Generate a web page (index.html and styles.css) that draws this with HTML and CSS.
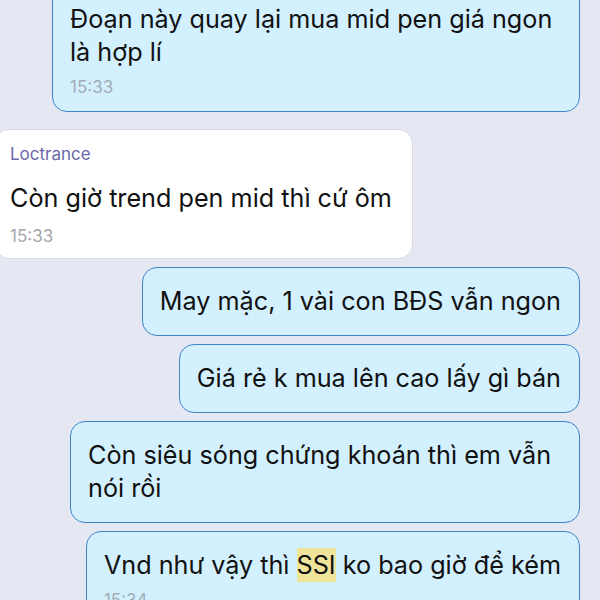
FILE: index.html
```html
<!DOCTYPE html>
<html lang="vi">

<head>
    <meta charset="UTF-8">
    <meta name="viewport" content="width=device-width, initial-scale=1.0">
    <title>Chat</title>
    <link rel="stylesheet" href="styles.css">
</head>

<body>
    <div class="chat">
        <div class="bubble out first">
            <div class="text">Đoạn này quay lại mua mid pen giá ngon là hợp lí</div>
            <div class="time">15:33</div>
        </div>

        <div class="bubble in">
            <div class="name">Loctrance</div>
            <div class="text">Còn giờ trend pen mid thì cứ ôm</div>
            <div class="time">15:33</div>
        </div>

        <div class="bubble out">
            <div class="text">May mặc, 1 vài con BĐS vẫn ngon</div>
        </div>

        <div class="bubble out">
            <div class="text">Giá rẻ k mua lên cao lấy gì bán</div>
        </div>

        <div class="bubble out">
            <div class="text">Còn siêu sóng chứng khoán thì em vẫn nói rồi</div>
        </div>

        <div class="bubble out">
            <div class="text">Vnd như vậy thì <span class="mark">SSI</span> ko bao giờ để kém</div>
            <div class="time">15:34</div>
        </div>
    </div>
</body>

</html>
```

FILE: styles.css
```css
body {
    margin: 0;
    background: #e5e8f2;
    font-family: 'Inter', 'Noto Sans', sans-serif;
    overflow: hidden;
    height: 600px;
}

.chat {
    display: flex;
    flex-direction: column;
    align-items: flex-end;
    gap: 8px;
    padding-right: 20px;
    margin-top: -15px;
}

.bubble {
    box-sizing: border-box;
    max-width: 510px;
    padding: 17px 18px 17px 17px;
    border-radius: 15px;
    background: #d2f0fd;
    border: 1.5px solid #3f84c8;
    color: #111;
}

.bubble.first {
    width: 528px;
    max-width: none;
    padding-bottom: 13px;
    margin-bottom: 9px;
}

.bubble.in {
    align-self: flex-start;
    margin-left: -6px;
    padding: 13px 16px 11px 15px;
    background: #ffffff;
    border: 1px solid #d9dce4;
    width: 419px;
}

.text {
    font-size: 25.2px;
    line-height: 33px;
}

.name {
    font-size: 17px;
    line-height: 22px;
    color: #6a68aa;
    margin-bottom: 17px;
}

.time {
    font-size: 17px;
    line-height: 22px;
    color: #a3adb6;
    margin-top: 7px;
}

.bubble.in .time {
    color: #a6a6aa;
    margin-top: 10px;
}

.mark {
    background: #efe49a;
    padding: 2px 0;
}
```
